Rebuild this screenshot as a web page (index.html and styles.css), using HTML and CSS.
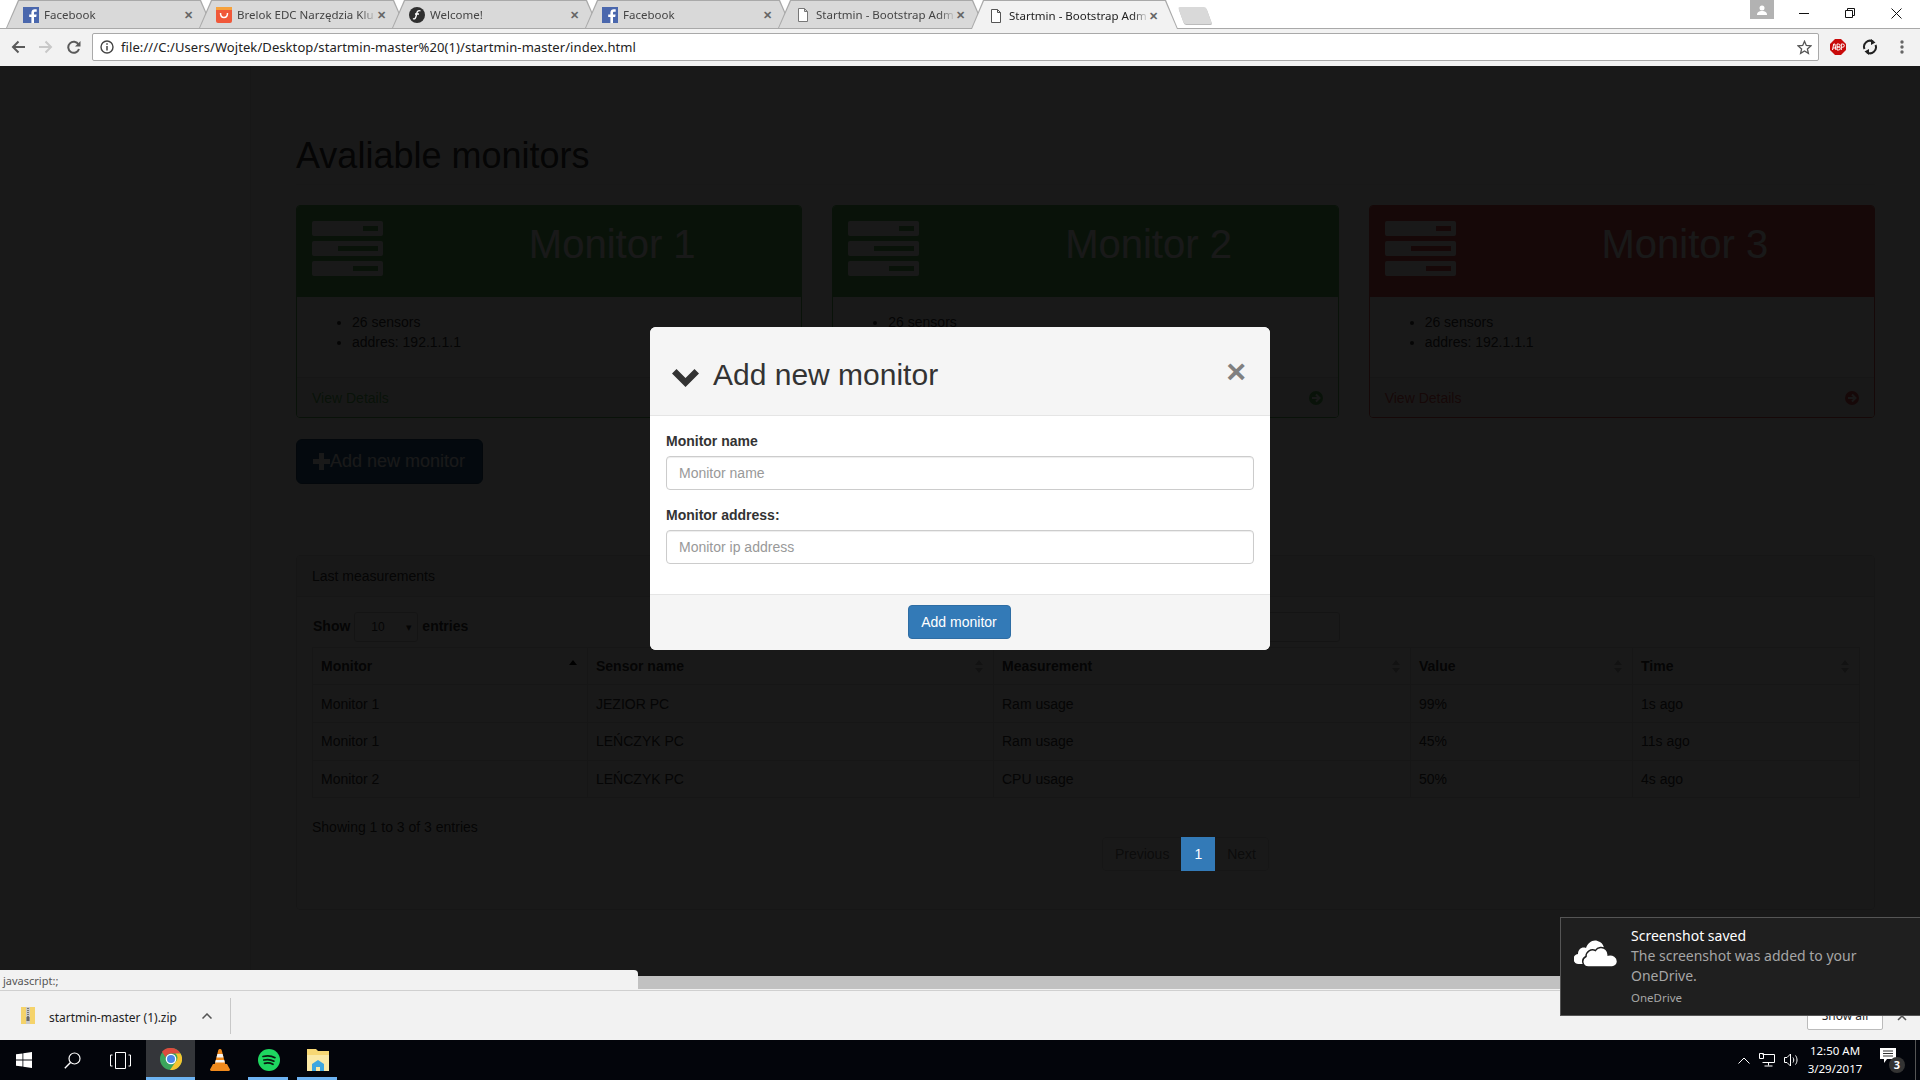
FILE: index.html
```html
<!DOCTYPE html>
<html>
<head>
<meta charset="utf-8">
<title>Startmin - Bootstrap Admin</title>
<link rel="stylesheet" href="styles.css">
</head>
<body>
	<!-- browser tabs -->
	<div class="tabstrip">
		<div class="tab">
			<svg class="favicon" viewBox="0 0 16 16"><rect width="16" height="16" fill="#4a67ad"/><path d="M11 16V10h2.2l.4-2.6H11V6c0-.8.3-1.300 1.300-1.300h1.400V2.300C13.300 2.200 12.600 2.200 11.800 2.200 9.800 2.200 8.400 3.400 8.400 5.600v1.800H6.200V10h2.200v6z" fill="#fff"/></svg>
			<span class="tab-title">Facebook</span>
			<span class="tab-close">✕</span>
		</div>
		<div class="tab">
			<svg class="favicon" viewBox="0 0 16 16"><rect width="16" height="16" rx="2" fill="#f0583a"/><rect width="16" height="3" fill="#f7a13c"/><path d="M4.500 6c0 6 7 6 7 0" fill="none" stroke="#fff" stroke-width="1.500"/></svg>
			<span class="tab-title">Brelok EDC Narzędzia Klu</span>
			<span class="tab-close">✕</span>
		</div>
		<div class="tab">
			<svg class="favicon" viewBox="0 0 16 16"><circle cx="8" cy="8" r="8" fill="#2e2e2e"/><path d="M4 11.500c1.500 1 2.500 0 3-2l1-4c.4-1.500 2-2.200 3.500-1.500M6 7h4" fill="none" stroke="#fff" stroke-width="1.300"/></svg>
			<span class="tab-title">Welcome!</span>
			<span class="tab-close">✕</span>
		</div>
		<div class="tab">
			<svg class="favicon" viewBox="0 0 16 16"><rect width="16" height="16" fill="#4a67ad"/><path d="M11 16V10h2.2l.4-2.6H11V6c0-.8.3-1.300 1.300-1.300h1.400V2.300C13.300 2.200 12.600 2.200 11.800 2.200 9.800 2.200 8.400 3.400 8.400 5.600v1.800H6.200V10h2.200v6z" fill="#fff"/></svg>
			<span class="tab-title">Facebook</span>
			<span class="tab-close">✕</span>
		</div>
		<div class="tab">
			<svg class="favicon" viewBox="0 0 16 16"><path d="M3.500 1.500h6l3 3v10h-9zM9.500 1.500v3h3" fill="#fff" stroke="#777"/></svg>
			<span class="tab-title">Startmin - Bootstrap Adm</span>
			<span class="tab-close">✕</span>
		</div>
		<div class="tab active">
			<svg class="favicon" viewBox="0 0 16 16"><path d="M3.500 1.500h6l3 3v10h-9zM9.500 1.500v3h3" fill="#fff" stroke="#555"/></svg>
			<span class="tab-title">Startmin - Bootstrap Adm</span>
			<span class="tab-close">✕</span>
		</div>
		<div class="newtab"></div>
		<div class="profile">
			<svg width="10" height="10" viewBox="0 0 10 10"><circle cx="5" cy="3" r="2.500" fill="#fff"/><path d="M0 10c0-3 2-4 5-4s5 1 5 4z" fill="#fff"/></svg>
		</div>
		<div class="winbtn"><svg width="10" height="10" viewBox="0 0 10 10"><path d="M0 5.500h10" stroke="#111"/></svg></div>
		<div class="winbtn"><svg width="10" height="10" viewBox="0 0 10 10"><path d="M.5 2.500h7v7h-7zM2.500 2.500v-2h7v7h-2" fill="none" stroke="#111"/></svg></div>
		<div class="winbtn"><svg width="11" height="11" viewBox="0 0 11 11"><path d="M.5.5l10 10M10.500.5l-10 10" stroke="#111"/></svg></div>
	</div>

	<!-- address bar -->
	<div class="toolbar">
		<div class="navbtn"><svg width="14" height="14" viewBox="0 0 14 14"><path d="M14 7H2M7.500 1.500L2 7l5.500 5.500" fill="none" stroke="#5a5a5a" stroke-width="2"/></svg></div>
		<div class="navbtn"><svg width="14" height="14" viewBox="0 0 14 14"><path d="M0 7h12M6.500 1.500L12 7l-5.500 5.500" fill="none" stroke="#c8c8c8" stroke-width="2"/></svg></div>
		<div class="navbtn"><svg width="14" height="14" viewBox="0 0 14 14"><path d="M12 9a5.500 5.500 0 1 1-.5-4.500" fill="none" stroke="#5a5a5a" stroke-width="2"/><path d="M13.500 1v5.500H8z" fill="#5a5a5a"/></svg></div>
		<div class="omnibox">
			<svg class="info" width="14" height="14" viewBox="0 0 14 14"><circle cx="7" cy="7" r="6" fill="none" stroke="#444" stroke-width="1.400"/><path d="M7 6v4.500M7 3.300v1.500" stroke="#444" stroke-width="1.500"/></svg>
			<span class="url">file:///C:/Users/Wojtek/Desktop/startmin-master%20(1)/startmin-master/index.html</span>
			<svg width="15" height="15" viewBox="0 0 15 15"><path d="M7.500 1.300l1.800 4.200 4.500.4-3.400 3 1 4.400-3.900-2.300-3.900 2.300 1-4.400-3.400-3 4.500-.4z" fill="none" stroke="#555" stroke-width="1.300"/></svg>
		</div>
		<div class="extbtn"><svg width="16" height="16" viewBox="0 0 16 16"><path d="M5 0h6l5 5v6l-5 5H5l-5-5V5z" fill="#c90b0b"/><path d="M2.500 11l1.200-6h1.200l1 6M3 9h2.500M7 5h1.500a1.400 1.400 0 0 1 0 3H7h1.700a1.500 1.500 0 0 1 0 3H7zM11.300 11V5h1.400a1.500 1.500 0 0 1 0 3.200h-1.400" fill="none" stroke="#fff"/></svg></div>
		<div class="extbtn"><svg width="16" height="16" viewBox="0 0 16 16"><path d="M2.500 10A6 6 0 0 1 11 2.500M13.500 6A6 6 0 0 1 5 13.500" fill="none" stroke="#222" stroke-width="2"/><path d="M9 0l4.500 3.500L9 6zM7 10l-4.500 2.500L7 16z" fill="#222"/></svg></div>
		<div class="extbtn"><svg width="4" height="14" viewBox="0 0 4 14"><circle cx="2" cy="2" r="1.700" fill="#666"/><circle cx="2" cy="7" r="1.700" fill="#666"/><circle cx="2" cy="12" r="1.700" fill="#666"/></svg></div>
	</div>

	<!-- page -->
	<div class="page">
		<div class="wrapper">
			<h1 class="page-header">Avaliable monitors</h1>

			<div class="monitors">
				<div class="panel panel-green">
					<div class="panel-heading monitor-head">
						<svg class="tasks" viewBox="0 0 71 55"><path fill-rule="evenodd" d="M2 0h67a2 2 0 0 1 2 2v11a2 2 0 0 1-2 2H2a2 2 0 0 1-2-2V2a2 2 0 0 1 2-2zM51 5v5h15V5zM2 20h67a2 2 0 0 1 2 2v11a2 2 0 0 1-2 2H2a2 2 0 0 1-2-2V22a2 2 0 0 1 2-2zM26 25v5h40v-5zM2 40h67a2 2 0 0 1 2 2v11a2 2 0 0 1-2 2H2a2 2 0 0 1-2-2V42a2 2 0 0 1 2-2zM41 45v5h25v-5z" fill="#fff"/></svg>
						<div class="monitor-name">Monitor 1</div>
					</div>
					<div class="panel-body">
						<ul class="facts">
							<li>26 sensors</li>
							<li>addres: 192.1.1.1</li>
						</ul>
					</div>
					<div class="panel-footer">
						<span>View Details</span>
						<svg class="go" viewBox="0 0 14 14"><circle cx="7" cy="7" r="7" fill="currentColor"/><path d="M3 7h7M7 3.500L10.500 7 7 10.500" fill="none" stroke="#fff" stroke-width="2"/></svg>
					</div>
				</div>
				<div class="panel panel-green">
					<div class="panel-heading monitor-head">
						<svg class="tasks" viewBox="0 0 71 55"><path fill-rule="evenodd" d="M2 0h67a2 2 0 0 1 2 2v11a2 2 0 0 1-2 2H2a2 2 0 0 1-2-2V2a2 2 0 0 1 2-2zM51 5v5h15V5zM2 20h67a2 2 0 0 1 2 2v11a2 2 0 0 1-2 2H2a2 2 0 0 1-2-2V22a2 2 0 0 1 2-2zM26 25v5h40v-5zM2 40h67a2 2 0 0 1 2 2v11a2 2 0 0 1-2 2H2a2 2 0 0 1-2-2V42a2 2 0 0 1 2-2zM41 45v5h25v-5z" fill="#fff"/></svg>
						<div class="monitor-name">Monitor 2</div>
					</div>
					<div class="panel-body">
						<ul class="facts">
							<li>26 sensors</li>
							<li>addres: 192.1.1.1</li>
						</ul>
					</div>
					<div class="panel-footer">
						<span>View Details</span>
						<svg class="go" viewBox="0 0 14 14"><circle cx="7" cy="7" r="7" fill="currentColor"/><path d="M3 7h7M7 3.500L10.500 7 7 10.500" fill="none" stroke="#fff" stroke-width="2"/></svg>
					</div>
				</div>
				<div class="panel panel-red">
					<div class="panel-heading monitor-head">
						<svg class="tasks" viewBox="0 0 71 55"><path fill-rule="evenodd" d="M2 0h67a2 2 0 0 1 2 2v11a2 2 0 0 1-2 2H2a2 2 0 0 1-2-2V2a2 2 0 0 1 2-2zM51 5v5h15V5zM2 20h67a2 2 0 0 1 2 2v11a2 2 0 0 1-2 2H2a2 2 0 0 1-2-2V22a2 2 0 0 1 2-2zM26 25v5h40v-5zM2 40h67a2 2 0 0 1 2 2v11a2 2 0 0 1-2 2H2a2 2 0 0 1-2-2V42a2 2 0 0 1 2-2zM41 45v5h25v-5z" fill="#fff"/></svg>
						<div class="monitor-name">Monitor 3</div>
					</div>
					<div class="panel-body">
						<ul class="facts">
							<li>26 sensors</li>
							<li>addres: 192.1.1.1</li>
						</ul>
					</div>
					<div class="panel-footer">
						<span>View Details</span>
						<svg class="go" viewBox="0 0 14 14"><circle cx="7" cy="7" r="7" fill="currentColor"/><path d="M3 7h7M7 3.500L10.500 7 7 10.500" fill="none" stroke="#fff" stroke-width="2"/></svg>
					</div>
				</div>
			</div>

			<button class="btn-add"><svg width="17" height="17" viewBox="0 0 17 17"><path d="M6 0h5v6h6v5h-6v6H6v-6H0V6h6z" fill="#fff"/></svg>Add new monitor</button>

			<div class="panel panel-default">
				<div class="panel-heading">Last measurements</div>
				<div class="panel-body">
					<div class="dt-top">
						<div class="dt-length"><b>Show</b><span class="fake-select">10<i>▾</i></span><b>entries</b></div>
						<div class="fake-search"></div>
					</div>
					<table class="dt">
						<colgroup>
							<col class="c1"><col class="c2"><col class="c3"><col class="c4"><col class="c5">
						</colgroup>
						<thead>
							<tr>
								<th><div class="th-in">Monitor<span class="sort up"></span></div></th>
								<th><div class="th-in">Sensor name<span class="sort"></span></div></th>
								<th><div class="th-in">Measurement<span class="sort"></span></div></th>
								<th><div class="th-in">Value<span class="sort"></span></div></th>
								<th><div class="th-in">Time<span class="sort"></span></div></th>
							</tr>
						</thead>
						<tbody>
							<tr><td>Monitor 1</td><td>JEZIOR PC</td><td>Ram usage</td><td>99%</td><td>1s ago</td></tr>
							<tr><td>Monitor 1</td><td>LEŃCZYK PC</td><td>Ram usage</td><td>45%</td><td>11s ago</td></tr>
							<tr><td>Monitor 2</td><td>LEŃCZYK PC</td><td>CPU usage</td><td>50%</td><td>4s ago</td></tr>
						</tbody>
					</table>
					<div class="dt-info">Showing 1 to 3 of 3 entries</div>
					<div class="dt-paging">
						<span class="pg first">Previous</span><span class="pg current">1</span><span class="pg last">Next</span>
					</div>
				</div>
			</div>
		</div>

		<div class="backdrop"></div>

		<div class="modal">
			<div class="modal-header">
				<svg class="chevron" viewBox="0 0 27 18"><path d="M0 4.500L4.500 0l9 9 9-9L27 4.500 13.500 18z" fill="#333"/></svg>
				<h4 class="modal-title">Add new monitor</h4>
				<span class="close">×</span>
			</div>
			<div class="modal-body">
				<label class="field-label">Monitor name</label>
				<input class="field" type="text" placeholder="Monitor name">
				<label class="field-label">Monitor address:</label>
				<input class="field" type="text" placeholder="Monitor ip address">
			</div>
			<div class="modal-footer">
				<button class="btn-primary">Add monitor</button>
			</div>
		</div>
	</div>

	<div class="hscroll"><div class="hscroll-thumb"></div></div>

	<!-- downloads shelf -->
	<div class="shelf">
		<svg class="zip" viewBox="0 0 14 17"><rect width="14" height="17" fill="#f5d36b"/><rect x="5" width="4" height="17" fill="#c9c9c9"/><path d="M7 1v9" stroke="#777" stroke-width="2" stroke-dasharray="1 1"/><rect x="5.500" y="10" width="3" height="4" fill="#666"/></svg>
		<span class="zip-name">startmin-master (1).zip</span>
		<svg class="zip-caret" width="10" height="6" viewBox="0 0 10 6"><path d="M.5 5.500L5 1l4.500 4.500" fill="none" stroke="#555" stroke-width="1.500"/></svg>
		<div class="shelf-sep"></div>
		<div class="show-all">Show all</div>
		<svg class="shelf-x" width="10" height="10" viewBox="0 0 10 10"><path d="M1 1l8 8M9 1L1 9" stroke="#555" stroke-width="1.500"/></svg>
	</div>

	<!-- taskbar -->
	<div class="taskbar">
		<div class="task start"><svg width="16" height="16" viewBox="0 0 16 16"><path d="M0 2.300l6.500-.9v6.200H0zM7.300 1.300L16 0v7.600H7.300zM0 8.400h6.500v6.200L0 13.700zM7.300 8.400H16V16l-8.700-1.300z" fill="#fff"/></svg></div>
		<div class="task"><svg width="17" height="17" viewBox="0 0 17 17"><circle cx="10.500" cy="6.500" r="5.500" fill="none" stroke="#fff" stroke-width="1.200"/><path d="M6.500 10.500L.8 16.200" stroke="#fff" stroke-width="1.400"/></svg></div>
		<div class="task taskview"><svg width="21" height="17" viewBox="0 0 21 17"><path d="M5.500.5h10v16h-10zM2.500 3H.5v11h2M18.500 3h2v11h-2" fill="none" stroke="#fff"/></svg></div>
		<div class="task current">
			<svg width="22" height="22" viewBox="0 0 22 22"><circle cx="11" cy="11" r="11" fill="#3ba55c"/><path d="M11 0a11 11 0 0 1 9.500 5.500H11a5.500 5.500 0 0 0-5.300 4L2 3.800A11 11 0 0 1 11 0z" fill="#dd4b3e"/><path d="M20.500 5.500A11 11 0 0 1 10 22l5.500-8a5.500 5.500 0 0 0 0-8.500z" fill="#f4c430"/><circle cx="11" cy="11" r="5.300" fill="#fff"/><circle cx="11" cy="11" r="4" fill="#4a86e8"/></svg>
		</div>
		<div class="task">
			<svg width="20" height="22" viewBox="0 0 20 22"><path d="M10 0c1 0 1.500.5 1.800 1.500L15.500 16h-11L8.200 1.500C8.500.5 9 0 10 0z" fill="#f08a1d"/><path d="M7.400 5h5.200l.9 3.500h-7zM5.800 11h8.400l.7 2.500H5.100z" fill="#f4f4f4"/><path d="M3 15h14l3 5.500c0 1-1 1.500-2 1.500H2c-1 0-2-.5-2-1.500z" fill="#f08a1d"/></svg>
		</div>
		<div class="task running">
			<svg width="22" height="22" viewBox="0 0 22 22"><circle cx="11" cy="11" r="11" fill="#1ed760"/><path d="M5 7.500c4-1 8.500-.8 12 1.200M5.800 11c3.500-.8 7.200-.5 10.200 1.200M6.500 14.300c3-.7 6-.4 8.500 1" fill="none" stroke="#0b1a10" stroke-width="1.700" stroke-linecap="round"/></svg>
		</div>
		<div class="task running">
			<svg width="22" height="22" viewBox="0 0 22 22"><path d="M0 0h9l2 2h11v20H0z" fill="#f7d774"/><path d="M0 6h22v16H0z" fill="#fbe9a6"/><path d="M5 22v-7l6-4 6 4v7h-4v-4H9v4z" fill="#3ea6e0"/></svg>
		</div>
		<div class="tray">
			<svg width="12" height="7" viewBox="0 0 12 7"><path d="M.5 6.500L6 1l5.500 5.500" fill="none" stroke="#fff"/></svg>
			<svg width="16" height="14" viewBox="0 0 16 14"><path d="M3.500 1.500h12v8h-12M9.500 9.500v3M5.500 13h8M.5.500h4v5h-4z" fill="none" stroke="#fff"/></svg>
			<svg width="15" height="14" viewBox="0 0 15 14"><path d="M.5 4.500h2.500L6.500 1v12L3 9.500H.5zM9 4.500c1 1.500 1 3.500 0 5M11.500 2.500c2 2.500 2 6.500 0 9" fill="none" stroke="#fff"/></svg>
			<div class="clock"><div>12:50 AM</div><div>3/29/2017</div></div>
			<div class="action-center">
				<svg width="16" height="15" viewBox="0 0 16 15"><path d="M0 0h16v11H7l-3 4v-4H0z" fill="#fff"/><path d="M3 3h10M3 5.500h10M3 8h10" stroke="#333"/></svg>
				<span class="badge">3</span>
			</div>
			<div class="show-desktop"></div>
		</div>
	</div>

	<div class="status-bubble">javascript:;</div>

	<div class="toast">
		<svg class="toast-icon" viewBox="0 0 44 27"><path d="M5 24a5 5 0 0 1-1-10c0-5 4-7.500 8-6 2-6 8-10 14-6 2.500 1.500 4 4 4 7v15z" fill="#fff"/><path d="M14 27a5.500 5.500 0 0 1-2-10.500c0-5 5-8 9.500-6 2-3.500 7.500-4 10.500-1 1.500 1.500 2.200 3.500 2.200 5.500 4.800-.8 9.300 1.500 9.300 6.500 0 3-2.500 5.500-5.500 5.500z" fill="#fff" stroke="#1f1f1f" stroke-width="1.500"/></svg>
		<div class="toast-text">
			<div class="toast-title">Screenshot saved</div>
			<div class="toast-msg">The screenshot was added to your OneDrive.</div>
			<div class="toast-src">OneDrive</div>
		</div>
	</div>
</body>
</html>
```

FILE: styles.css
```css
* {
	box-sizing: border-box;
}

html, body {
	margin: 0;
	height: 100%;
}

body {
	display: flex;
	flex-direction: column;
	height: 100vh;
	overflow: hidden;
	position: relative;
	font-family: "Liberation Sans", Arial, sans-serif;
	font-size: 14px;
	line-height: 20px;
	color: #333;
	background: #fff;
}

/* browser chrome */
.tabstrip {
	display: flex;
	align-items: flex-start;
	flex: none;
	height: 29px;
	padding-left: 6px;
	background: #fff;
	border-bottom: 1px solid #a9a9a9;
	font-family: "Noto Sans", sans-serif;
	font-size: 11.5px;
}

.tab {
	position: relative;
	display: flex;
	align-items: center;
	flex: none;
	width: 207px;
	height: 28px;
	margin-right: -14px;
	padding: 2px 17px 0 17px;
	color: #444;
	background: #a9a9a9;
	clip-path: polygon(0 100%, 12px 0, calc(100% - 12px) 0, 100% 100%);
}

.tab::before {
	content: "";
	position: absolute;
	top: 1px;
	left: 1px;
	right: 1px;
	bottom: 0;
	background: #d9d9d9;
	clip-path: polygon(0 100%, 12px 0, calc(100% - 12px) 0, 100% 100%);
}

.tab > * {
	position: relative;
}

.tab.active {
	height: 29px;
	z-index: 2;
	color: #222;
}

.tab.active::before {
	background: #f2f2f2;
}

.favicon {
	flex: none;
	width: 16px;
	height: 16px;
	margin-right: 5px;
}

.tab-title {
	flex: 1;
	overflow: hidden;
	white-space: nowrap;
	-webkit-mask-image: linear-gradient(to right, #000 88%, transparent);
	mask-image: linear-gradient(to right, #000 88%, transparent);
}

.tab-close {
	flex: none;
	width: 12px;
	font-size: 11px;
	font-weight: bold;
	color: #666;
}

.newtab {
	flex: none;
	width: 28px;
	height: 17px;
	margin: 7px 0 0 17px;
	background: #d9d9d9;
	border-radius: 2px;
	box-shadow: 0 1px 0 #bbb;
	transform: skewX(20deg);
}

.profile {
	display: flex;
	align-items: center;
	justify-content: center;
	flex: none;
	width: 24px;
	height: 19px;
	margin: 0 8px 0 auto;
	background: #b2b2b2;
}

.winbtn {
	display: flex;
	align-items: center;
	justify-content: center;
	flex: none;
	width: 46px;
	height: 26px;
	position: relative;
	left: -1px;
}

.toolbar {
	display: flex;
	align-items: center;
	flex: none;
	height: 37px;
	padding: 0 2px 1px 4px;
	background: #f2f2f2;
}

.navbtn {
	display: flex;
	align-items: center;
	justify-content: center;
	flex: none;
	width: 28px;
}

.omnibox {
	display: flex;
	align-items: center;
	flex: 1;
	height: 28px;
	margin: 0 3px 0 4px;
	padding: 0 6px 0 7px;
	background: #fff;
	border: 1px solid #a9a9a9;
	border-radius: 2px;
}

.url {
	flex: 1;
	margin-left: 7px;
	font-family: "Noto Sans", sans-serif;
	font-size: 13px;
	letter-spacing: .08px;
	color: #222;
}

.extbtn {
	display: flex;
	align-items: center;
	justify-content: center;
	flex: none;
	width: 32px;
}

/* the page */
.page {
	position: relative;
	flex: 1;
	min-height: 0;
	overflow: hidden;
	isolation: isolate;
	background: #fff;
}

.wrapper {
	height: 100%;
	margin-left: 250px;
	padding: 70px 45px 0 45px;
	border-left: 1px solid #e7e7e7;
}

.page-header {
	margin: 0 0 20px;
	padding-bottom: 8px;
	border-bottom: 1px solid #eee;
	font-size: 36px;
	font-weight: 500;
	line-height: 40px;
}

.monitors {
	display: flex;
	gap: 30px;
}

.panel {
	background: #fff;
	border: 1px solid #ddd;
	border-radius: 4px;
}

.monitors .panel {
	flex: 1;
	min-width: 0;
}

.panel-green {
	color: #333;
	border-color: #5cb85c;
}

.panel-red {
	border-color: #d9534f;
}

.panel-heading {
	padding: 10px 15px;
	background: #f5f5f5;
	border-bottom: 1px solid #ddd;
	border-radius: 3px 3px 0 0;
}

.monitor-head {
	display: grid;
	grid-template-columns: 1fr 3fr;
	height: 91px;
	padding: 15px 0 0;
	border: 0;
	color: #fff;
}

.panel-green .monitor-head {
	background: #5cb85c;
}

.panel-red .monitor-head {
	background: #d9534f;
}

.tasks {
	display: block;
	width: 71px;
	height: 55px;
	margin-left: 15px;
}

.monitor-name {
	margin-top: 1px;
	text-align: center;
	font-size: 40px;
	line-height: 44px;
}

.panel-body {
	padding: 15px;
}

.facts {
	margin: 0 0 10px;
	padding-left: 40px;
}

.panel-footer {
	display: flex;
	align-items: center;
	justify-content: space-between;
	height: 40px;
	padding: 0 15px;
	background: #f5f5f5;
	border-top: 1px solid #ddd;
	border-radius: 0 0 3px 3px;
}

.panel-green .panel-footer {
	color: #5cb85c;
}

.panel-red .panel-footer {
	color: #d9534f;
}

.go {
	width: 14px;
	height: 14px;
}

.btn-add {
	display: flex;
	align-items: center;
	width: 187px;
	height: 45px;
	margin: 21px 0 71px;
	padding: 0 16px;
	font-family: inherit;
	font-size: 18px;
	color: #fff;
	background: #286090;
	border: 1px solid #204d74;
	border-radius: 6px;
}

.panel-default .panel-body {
	padding-bottom: 38px;
}

.dt-top {
	display: flex;
	align-items: center;
	justify-content: space-between;
	height: 30px;
	padding-right: 519px;
	margin-bottom: 5px;
}

.dt-length {
	display: flex;
	align-items: center;
	gap: 4px;
	padding-left: 1px;
}

.dt-length b {
	margin-top: -2px;
}

.fake-select {
	display: flex;
	align-items: center;
	justify-content: space-between;
	width: 64px;
	height: 30px;
	padding: 0 5px 0 16px;
	font-size: 12px;
	background: #fff;
	border: 1px solid #ccc;
	border-radius: 3px;
}

.fake-select i {
	font-style: normal;
	font-size: 11px;
}

.fake-search {
	width: 170px;
	height: 30px;
	background: #fff;
	border: 1px solid #ccc;
	border-radius: 3px;
}

.dt {
	width: 1547px;
	table-layout: fixed;
	border-collapse: collapse;
	border: 1px solid #ddd;
}

.c1 { width: 275px; }
.c2 { width: 406px; }
.c3 { width: 417px; }
.c4 { width: 222px; }
.c5 { width: 227px; }

.dt th, .dt td {
	height: 37px;
	padding: 0 8px;
	text-align: left;
	border: 1px solid #ddd;
}

.dt td {
	height: 37.4px;
}

.dt tbody tr:first-child td {
	height: 38.3px;
}

.dt tbody tr:nth-child(odd) {
	background: #f9f9f9;
}

.th-in {
	display: flex;
	align-items: center;
	justify-content: space-between;
}

.sort {
	position: relative;
	width: 8px;
	height: 13px;
	margin-right: 2px;
}

.sort::before, .sort::after {
	content: "";
	position: absolute;
	left: 0;
	border-left: 4px solid transparent;
	border-right: 4px solid transparent;
	opacity: .3;
}

.sort::before {
	top: 0;
	border-bottom: 5px solid #000;
}

.sort::after {
	bottom: 0;
	border-top: 5px solid #000;
}

.sort.up::before {
	opacity: 1;
}

.sort.up::after {
	display: none;
}

.dt-info {
	margin-top: 19px;
}

.dt-paging {
	display: flex;
	justify-content: flex-end;
	padding-right: 590px;
}

.pg {
	height: 34px;
	padding: 6px 12px;
	color: #777;
	background: #fff;
	border: 1px solid #ddd;
	margin-left: -1px;
}

.pg.first {
	border-radius: 4px 0 0 4px;
}

.pg.last {
	border-radius: 0 4px 4px 0;
}

/* sits above the backdrop, as in the shot */
.pg.current {
	position: relative;
	z-index: 3;
	color: #fff;
	background: #337ab7;
	border-color: #337ab7;
}

.backdrop {
	position: absolute;
	top: 0;
	left: 0;
	right: 0;
	bottom: 0;
	z-index: 2;
	background: rgba(0,0,0,.9);
}

.modal {
	position: absolute;
	top: 261px;
	left: 650px;
	z-index: 4;
	width: 620px;
	background: #fff;
	border-radius: 6px;
	overflow: hidden;
}

.modal-header {
	display: flex;
	align-items: center;
	height: 89px;
	padding: 7px 24px 0 22px;
	background: #f5f5f5;
	border-bottom: 1px solid #e5e5e5;
}

.chevron {
	flex: none;
	width: 27px;
	height: 18px;
	margin: 6px 14px 0 0;
}

.modal-title {
	flex: 1;
	margin: 0;
	font-size: 30px;
	font-weight: 500;
	line-height: 33px;
}

.close {
	margin-top: -7px;
	font-size: 34px;
	font-weight: bold;
	line-height: 30px;
	color: #808080;
}

.modal-body {
	padding: 15px 16px;
}

.field-label {
	display: block;
	margin-bottom: 5px;
	font-weight: bold;
}

.field {
	display: block;
	width: 100%;
	height: 34px;
	margin-bottom: 15px;
	padding: 6px 12px;
	font-family: inherit;
	font-size: 14px;
	color: #555;
	background: #fff;
	border: 1px solid #ccc;
	border-radius: 4px;
	box-shadow: inset 0 1px 1px rgba(0,0,0,.075);
}

.field::placeholder {
	color: #999;
}

.modal-footer {
	display: flex;
	justify-content: center;
	height: 56px;
	padding: 10px 2px 0 0;
	background: #f5f5f5;
	border-top: 1px solid #e5e5e5;
}

.btn-primary {
	width: 103px;
	height: 34px;
	font-family: inherit;
	font-size: 14px;
	color: #fff;
	background: #337ab7;
	border: 1px solid #2e6da4;
	border-radius: 4px;
}

/* bottom of the window */
.hscroll {
	flex: none;
	height: 14px;
	background: #f1f1f1;
}

.hscroll-thumb {
	height: 13px;
	background: #c1c1c1;
}

.shelf {
	display: flex;
	align-items: center;
	flex: none;
	height: 50px;
	padding: 0 13px 0 21px;
	font-family: "Noto Sans", sans-serif;
	font-size: 12px;
	color: #222;
	background: #f2f2f2;
	border-top: 1px solid #d0d0d0;
}

.zip {
	width: 14px;
	height: 17px;
	margin-right: 14px;
}

.zip-name {
	padding-top: 5px;
}

.zip-caret {
	margin-left: 25px;
}

.shelf-sep {
	width: 1px;
	height: 36px;
	margin-left: 18px;
	background: #c8c8c8;
}

.show-all {
	width: 76px;
	height: 28px;
	margin: 0 14px 0 auto;
	text-align: center;
	line-height: 26px;
	background: #fff;
	border: 1px solid #bbb;
	border-radius: 2px;
}

.taskbar {
	display: flex;
	align-items: stretch;
	flex: none;
	height: 40px;
	background: #03050b;
}

.task {
	display: flex;
	align-items: center;
	justify-content: center;
	flex: none;
	width: 49px;
	position: relative;
}

.task.start {
	width: 48px;
}

.task.taskview svg {
	margin-right: 3px;
}

.task.current {
	background: #34363a;
	border-bottom: 3px solid #6db3f2;
}

.task.running::after {
	content: "";
	position: absolute;
	left: 4px;
	right: 5px;
	bottom: 0;
	height: 3px;
	background: #6db3f2;
}

.tray {
	display: flex;
	align-items: center;
	margin-left: auto;
	color: #fff;
	font-family: "Noto Sans", sans-serif;
	font-size: 11.5px;
	gap: 9px;
}

.clock {
	width: 64px;
	margin-left: -5px;
	text-align: center;
	line-height: 18px;
}

.action-center {
	position: relative;
	width: 28px;
	height: 30px;
	margin-left: 4px;
	padding-top: 3px;
}

.badge {
	position: absolute;
	top: 12px;
	left: 9px;
	width: 16px;
	height: 16px;
	font-size: 11px;
	font-weight: bold;
	line-height: 15px;
	text-align: center;
	background: #333;
	border-radius: 50%;
}

.show-desktop {
	width: 5px;
	height: 40px;
	margin-left: -2px;
	border-left: 1px solid #555;
}

.status-bubble {
	position: absolute;
	left: 0;
	bottom: 89px;
	width: 638px;
	height: 21px;
	padding: 1px 0 0 3px;
	font-family: "Noto Sans", sans-serif;
	font-size: 11px;
	color: #555;
	background: #f2f2f2;
	border-top-right-radius: 4px;
	border-bottom: 1px solid #d0d0d0;
}

.toast {
	position: absolute;
	top: 917px;
	left: 1560px;
	display: flex;
	width: 360px;
	height: 99px;
	padding: 8px 0 0 13px;
	font-family: "Noto Sans", sans-serif;
	color: #a6a6a6;
	background: #1f1f1f;
	border: 1px solid #555;
	border-right: 0;
}

.toast-icon {
	flex: none;
	width: 44px;
	height: 27px;
	margin: 14px 13px 0 0;
}

.toast-title {
	font-size: 14px;
	color: #fff;
}

.toast-msg {
	width: 250px;
	font-size: 14px;
}

.toast-src {
	font-size: 11.5px;
	line-height: 24px;
}
```
